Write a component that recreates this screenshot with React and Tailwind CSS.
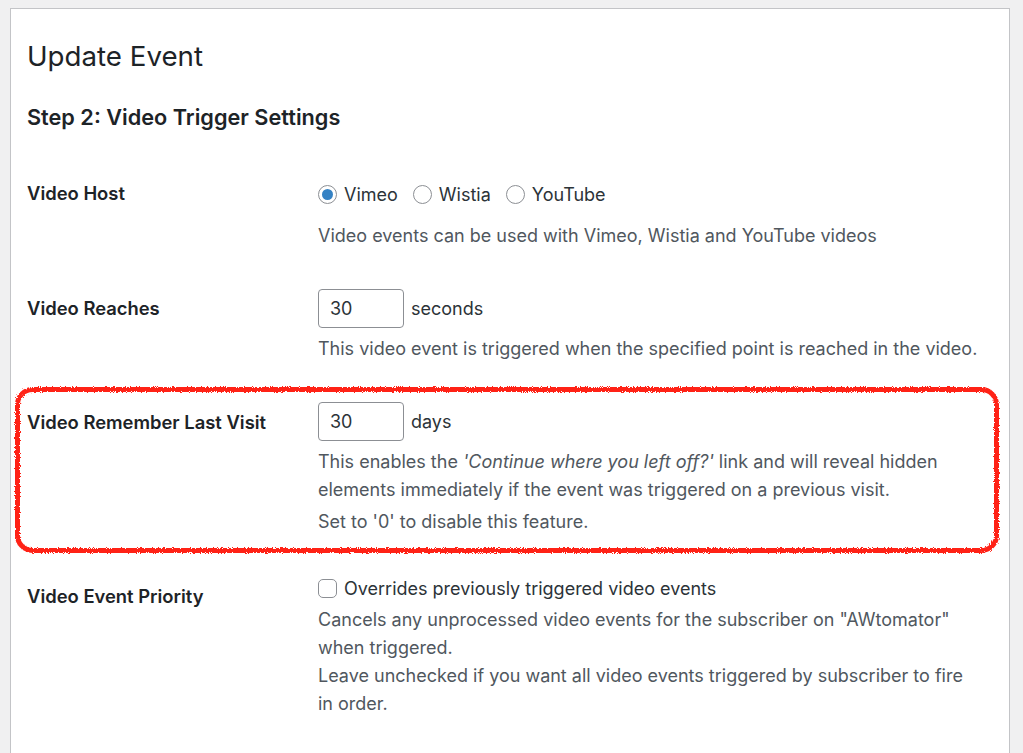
import React from 'react';

const labelCls = "w-[291px] shrink-0 text-[18.4px] leading-[26px] font-semibold text-[#1d2327]";
const descCls = "text-[18px] leading-[28px] text-[#50575e]";

function Radio({ checked, label }) {
  return (
    <label className="flex items-center gap-[7px] mr-[15px]">
      <span className="flex h-[19px] w-[19px] items-center justify-center rounded-full border border-[#8c8f94] bg-white">
        {checked && <span className="h-[11px] w-[11px] rounded-full bg-[#3582c4]" />}
      </span>
      <span className="text-[18px] text-[#2c3338]">{label}</span>
    </label>
  );
}

function NumberBox({ value, unit }) {
  return (
    <div className="flex items-center gap-[7px]">
      <div className="flex h-[39px] w-[86px] items-center rounded-[4px] border border-[#8c8f94] bg-white pl-[11px] text-[18px] text-[#2c3338]">
        {value}
      </div>
      <span className="text-[18px] text-[#2c3338]">{unit}</span>
    </div>
  );
}

// hand-drawn red marker box around the highlighted row
function Highlight() {
  return (
    <svg className="pointer-events-none absolute left-[-13px] top-[-16px]" width="986" height="168">
      <defs>
        <filter id="rough">
          <feTurbulence type="fractalNoise" baseFrequency="1.2" numOctaves="2" result="n" />
          <feDisplacementMap in="SourceGraphic" in2="n" scale="4" />
        </filter>
      </defs>
      <rect x="3.5" y="3.5" width="979" height="161" rx="15" fill="none" stroke="#ff2419" strokeWidth="5" filter="url(#rough)" />
    </svg>
  );
}

export default function App() {
  return (
    <div className="h-[753px] overflow-hidden bg-[#f0f0f1] pl-[10px] pt-[8px]" style={{ fontFamily: 'Inter, "Noto Sans", sans-serif' }}>
      <div className="h-[760px] w-[1000px] border border-[#c3c4c7] bg-white pl-[16px] pr-[16px] pt-[29px]">
        <h1 className="text-[27.7px] leading-[36px] font-normal text-[#1d2327]">Update Event</h1>
        <h2 className="mt-[29px] text-[21.7px] leading-[28px] font-semibold text-[#1d2327]">Step 2: Video Trigger Settings</h2>

        {/* Video Host */}
        <div className="mt-[49px] flex">
          <div className={labelCls}>Video Host</div>
          <div>
            <div className="flex h-[28px] items-center">
              <Radio checked label="Vimeo" />
              <Radio label="Wistia" />
              <Radio label="YouTube" />
            </div>
            <p className={`mt-[14px] ${descCls}`}>Video events can be used with Vimeo, Wistia and YouTube videos</p>
          </div>
        </div>

        {/* Video Reaches */}
        <div className="mt-[39px] flex">
          <div className={`${labelCls} pt-[6px]`}>Video Reaches</div>
          <div>
            <NumberBox value="30" unit="seconds" />
            <p className={`mt-[7px] ${descCls}`}>This video event is triggered when the specified point is reached in the video.</p>
          </div>
        </div>

        {/* Video Remember Last Visit */}
        <div className="relative mt-[39px] flex">
          <Highlight />
          <div className={`${labelCls} pt-[7px]`}>Video Remember Last Visit</div>
          <div>
            <NumberBox value="30" unit="days" />
            <p className={`mt-[7px] ${descCls}`}>
              This enables the <em>'Continue where you left off?'</em> link and will reveal hidden<br />
              elements immediately if the event was triggered on a previous visit.
            </p>
            <p className={`mt-[4px] ${descCls}`}>Set to '0' to disable this feature.</p>
          </div>
        </div>

        {/* Video Event Priority */}
        <div className="mt-[38px] flex">
          <div className={`${labelCls} pt-[9px]`}>Video Event Priority</div>
          <div>
            <label className="flex h-[28px] items-center gap-[7px]">
              <span className="h-[19px] w-[19px] rounded-[5px] border border-[#8c8f94] bg-white" />
              <span className="text-[18px] text-[#2c3338]">Overrides previously triggered video events</span>
            </label>
            <p className={`mt-[4px] ${descCls}`}>
              Cancels any unprocessed video events for the subscriber on "AWtomator"<br />
              when triggered.<br />
              Leave unchecked if you want all video events triggered by subscriber to fire<br />
              in order.
            </p>
          </div>
        </div>
      </div>
    </div>
  );
}
